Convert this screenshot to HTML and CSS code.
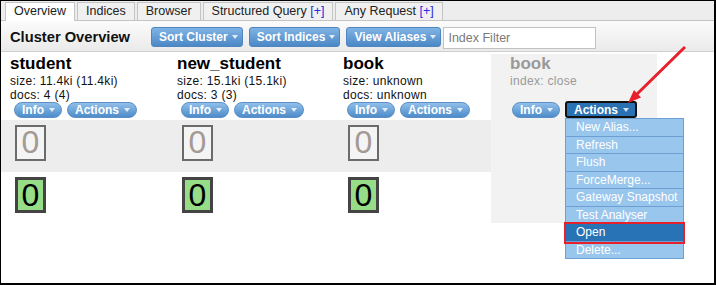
FILE: index.html
```html
<!DOCTYPE html>
<html lang="en">
<head>
    <meta charset="UTF-8">
    <meta name="viewport" content="width=device-width, initial-scale=1.0">
    <title>Cluster Overview</title>
    <link rel="stylesheet" href="styles.css">
</head>
<body>
<div class="frame">

    <!-- Top tabs -->
    <div class="tabs">
        <div class="tab active">Overview</div>
        <div class="tab">Indices</div>
        <div class="tab">Browser</div>
        <div class="tab">Structured Query <span class="plus">[+]</span></div>
        <div class="tab">Any Request <span class="plus">[+]</span></div>
    </div>

    <!-- Header toolbar -->
    <div class="header">
        <div class="title">Cluster Overview</div>
        <button class="btn">Sort Cluster <span class="caret"></span></button>
        <button class="btn">Sort Indices <span class="caret"></span></button>
        <button class="btn last">View Aliases <span class="caret"></span></button>
        <input class="filter" type="text" placeholder="Index Filter">
    </div>

    <!-- Index overview table -->
    <div class="overview">
        <div class="cell index-cell">
            <div class="index-name">student</div>
            <div class="index-info">size: 11.4ki (11.4ki)</div>
            <div class="index-info">docs: 4 (4)</div>
            <div class="pills">
                <button class="pill">Info <span class="caret"></span></button>
                <button class="pill">Actions <span class="caret"></span></button>
            </div>
        </div>
        <div class="cell index-cell">
            <div class="index-name">new_student</div>
            <div class="index-info">size: 15.1ki (15.1ki)</div>
            <div class="index-info">docs: 3 (3)</div>
            <div class="pills">
                <button class="pill">Info <span class="caret"></span></button>
                <button class="pill">Actions <span class="caret"></span></button>
            </div>
        </div>
        <div class="cell index-cell">
            <div class="index-name">book</div>
            <div class="index-info">size: unknown</div>
            <div class="index-info">docs: unknown</div>
            <div class="pills">
                <button class="pill">Info <span class="caret"></span></button>
                <button class="pill">Actions <span class="caret"></span></button>
            </div>
        </div>
        <div class="cell index-cell closed">
            <div class="index-name">book</div>
            <div class="index-info">index: close</div>
            <div class="pills">
                <button class="pill">Info <span class="caret"></span></button>
                <div class="menu-wrap">
                    <button class="pill focused">Actions <span class="caret"></span></button>
                    <ul class="menu">
                        <li>New Alias...</li>
                        <li>Refresh</li>
                        <li>Flush</li>
                        <li>ForceMerge...</li>
                        <li>Gateway Snapshot</li>
                        <li>Test Analyser</li>
                        <li class="selected">Open</li>
                        <li>Delete...</li>
                    </ul>
                </div>
            </div>
        </div>

        <!-- replica shards -->
        <div class="cell band"><div class="shard replica">0</div></div>
        <div class="cell band"><div class="shard replica">0</div></div>
        <div class="cell band"><div class="shard replica">0</div></div>
        <div class="cell closed"></div>

        <!-- primary shards -->
        <div class="cell"><div class="shard primary">0</div></div>
        <div class="cell"><div class="shard primary">0</div></div>
        <div class="cell"><div class="shard primary">0</div></div>
        <div class="cell closed"></div>
    </div>

    <!-- red pointer arrow -->
    <svg class="arrow" width="716" height="285" viewBox="0 0 716 285">
        <line x1="685" y1="47" x2="634" y2="97" stroke="#e6212b" stroke-width="3"/>
        <polygon points="628,103 641,97.5 634,90" fill="#e6212b"/>
    </svg>
</div>
</body>
</html>
```

FILE: styles.css
```css
/* Page frame */
body {
    margin: 0;
    padding: 0;
    font-family: 'Liberation Sans', Arial, sans-serif;
    font-size: 12px;
    background-color: #fff;
}

.frame {
    position: relative;
    width: 716px;
    height: 285px;
    box-sizing: border-box;
    border: 1px solid #000;
    border-right-width: 2px;
    border-bottom-width: 2px;
    overflow: hidden;
    background-color: #fff;
}

/* Tabs */
.tabs {
    display: flex;
    align-items: flex-end;
    height: 19px;
    padding-left: 4px;
    background-color: #ededed;
    border-bottom: 1px solid #c4c4c4;
}

.tab {
    height: 17px;
    line-height: 17px;
    padding: 0 8px;
    margin-right: 2px;
    border: 1px solid #c4c4c4;
    border-bottom: none;
    font-size: 12.5px;
    color: #222;
    background-color: #f0f0f0;
}

.tab.active {
    background-color: #fff;
    height: 18px;
    margin-bottom: -1px;
}

.plus {
    color: #2a2ae0;
}

/* Header toolbar */
.header {
    display: flex;
    align-items: flex-start;
    height: 24px;
    padding: 6px 0 0 9px;
    border-bottom: 1px solid #cfcfcf;
    background: linear-gradient(#fbfbfb, #eaeaea);
}

.title {
    width: 141px;
    margin-top: 2px;
    font-size: 14.7px;
    font-weight: bold;
    color: #111;
}

.btn {
    display: flex;
    align-items: center;
    height: 20px;
    padding: 0 4px 0 7px;
    margin-right: 6px;
    border: 1px solid #4f86bf;
    border-radius: 3px;
    background: linear-gradient(#80b3e3, #4b88c6);
    color: #fff;
    font-family: 'Liberation Sans', Arial, sans-serif;
    font-size: 12px;
    font-weight: bold;
}

.btn.last {
    margin-right: 2px;
}

.caret {
    display: inline-block;
    width: 0;
    height: 0;
    margin-left: 4px;
    border-left: 3.5px solid transparent;
    border-right: 3.5px solid transparent;
    border-top: 4px solid rgba(255, 255, 255, 0.8);
}

.filter {
    width: 153px;
    height: 22px;
    box-sizing: border-box;
    padding: 0 4px;
    border: 1px solid #c2c2c2;
    font-family: 'Liberation Sans', Arial, sans-serif;
    font-size: 12.5px;
}

.filter::placeholder {
    color: #7a7a7a;
}

/* Overview grid */
.overview {
    display: grid;
    grid-template-columns: 167px 166px 157px 166px;
    grid-template-rows: 66px 52px 51px;
    margin-top: 2px;
}

.cell {
    padding-left: 9px;
}

.index-cell {
    display: flex;
    flex-direction: column;
    padding-bottom: 2px;
}

.index-name {
    font-size: 17px;
    font-weight: bold;
    line-height: 20px;
    color: #000;
}

.index-info {
    font-size: 12px;
    letter-spacing: 0.3px;
    line-height: 14px;
    color: #111;
}

.closed {
    background-color: #f2f2f2;
    padding-left: 19px;
}

.closed .index-name,
.closed .index-info {
    color: #999;
}

.band {
    background-color: #ededed;
}

/* Info / Actions pills */
.pills {
    display: flex;
    margin-top: auto;
    margin-left: 4px;
}

.closed .pills {
    margin-left: 2px;
}

.pill {
    display: flex;
    align-items: center;
    height: 16px;
    padding: 0 6px 0 7px;
    margin-right: 5px;
    border: 1px solid #5b8fc6;
    border-radius: 8px;
    background: linear-gradient(#90bfea, #4e8cc9);
    color: #fff;
    font-family: 'Liberation Sans', Arial, sans-serif;
    font-size: 12px;
    font-weight: bold;
}

.pill .caret {
    margin-left: 5px;
}

.pill.focused {
    height: 17px;
    margin-top: -1px;
    border: 2px solid #111;
    border-radius: 3px;
    background: #2a71b3;
}

.menu-wrap {
    position: relative;
}

/* Dropdown menu */
.menu {
    position: absolute;
    top: 16px;
    left: 0;
    width: 119px;
    margin: 0;
    padding: 0;
    list-style: none;
    box-sizing: border-box;
    border: 1px solid #6e9fd3;
    border-bottom: none;
    z-index: 2;
}

.menu li {
    height: 16.5px;
    line-height: 16.5px;
    padding-left: 10px;
    border-bottom: 1px solid #6e9fd3;
    background-color: #99c6ed;
    color: #fff;
    white-space: nowrap;
}

.menu li.selected {
    background-color: #2872b6;
    outline: 2.5px solid #e6212b;
}

/* Shard boxes */
.shard {
    width: 31px;
    height: 36px;
    box-sizing: border-box;
    margin: 5px 0 0 5px;
    text-align: center;
    font-size: 32px;
    line-height: 31px;
}

.replica {
    border: 2px solid #6b6b6b;
    color: #a39a94;
    background-color: #f4f4f4;
}

.primary {
    border: 3px solid #444;
    color: #000;
    background-color: #97dc87;
}

/* Annotation arrow */
.arrow {
    position: absolute;
    top: -1px;
    left: -1px;
    pointer-events: none;
    z-index: 3;
}
```
